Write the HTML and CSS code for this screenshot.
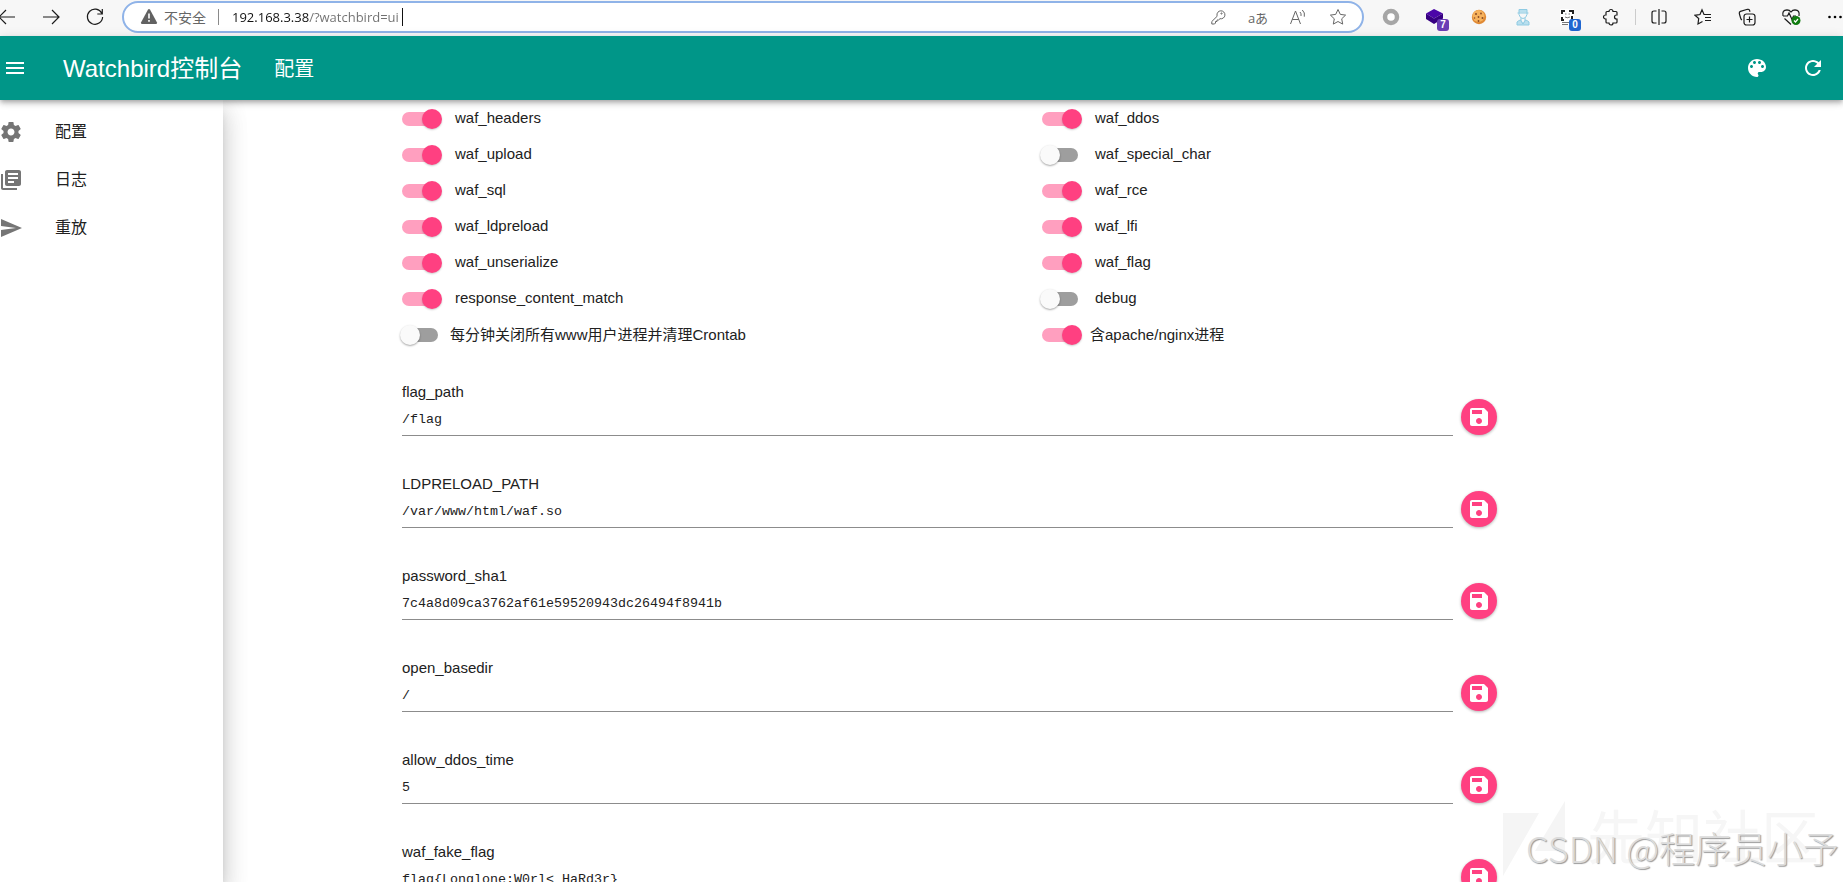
FILE: index.html
```html
<!DOCTYPE html>
<html lang="zh-CN">
<head>
<meta charset="utf-8">
<title>Watchbird控制台</title>
<link rel="stylesheet" href="styles.css">
</head>
<body>
<div class="browser">
  <div class="nav">
    <button class="tool nav-back" aria-label="后退"><svg width="20" height="20" viewBox="0 0 20 20" class="line"><path d="M18 10H2M9 3 2 10l7 7"/></svg></button>
    <button class="tool" aria-label="前进"><svg width="20" height="20" viewBox="0 0 20 20" class="line"><path d="M2 10h16M11 3l7 7-7 7"/></svg></button>
    <button class="tool" aria-label="刷新"><svg width="20" height="20" viewBox="0 0 20 20" class="line"><path d="M16.800 6.300A7.600 7.600 0 1 0 17.600 10M17.300 2v5h-5"/></svg></button>
  </div>
  <div class="address">
    <svg class="warn" width="18" height="18" viewBox="0 0 18 18"><path fill="#616161" d="M7.900 1.700 1 14.600Q.5 16 2 16h14q1.500 0 1-1.400L10.100 1.700Q9 .3 7.900 1.700z"/><path stroke="#fff" stroke-width="1.600" d="M9 5.500v5M9 12v1.700"/></svg>
    <span class="insecure">不安全</span>
    <span class="rule"></span>
    <input class="url" type="text" value="192.168.3.38/?watchbird=ui" aria-label="地址"><span class="caret"></span>
    <div class="address-tools">
      <button class="tool small" aria-label="密码"><svg width="16" height="16" viewBox="0 0 16 16" class="line grey"><path d="M7 6.500a4 4 0 1 1 3 3.200L8.500 11H7v1.500H5.500V14L4.500 15H1.800v-2.500L7.200 7.200z"/><circle cx="11.500" cy="4.500" r=".6"/></svg></button>
      <button class="tool small glyph" aria-label="翻译">aあ</button>
      <button class="tool small" aria-label="朗读"><svg width="18" height="18" viewBox="0 0 18 18" class="line grey"><path d="M1.500 16 6.500 3l5 13M3.300 11.500h6.500M11 4q1.500 1.500 1 4M13.300 2q3 2.600 2 6.700"/></svg></button>
      <button class="tool small" aria-label="收藏"><svg width="18" height="18" viewBox="0 0 18 18" class="line grey"><path d="m9 1.500 2.300 4.900 5.300.7-3.900 3.700 1 5.300L9 13.500l-4.700 2.600 1-5.300-3.900-3.700 5.300-.7z"/></svg></button>
    </div>
  </div>
  <div class="extensions">
    <button class="tool" aria-label="扩展"><svg width="18" height="18" viewBox="0 0 18 18"><circle cx="9" cy="9" r="6" fill="#fff" stroke="#a6a6a6" stroke-width="4.500"/></svg></button>
    <button class="tool" aria-label="扩展"><svg width="18" height="18" viewBox="0 0 18 18"><path fill="#4b06a8" d="m8 1 9 4.500-9 5-8-5z"/><path fill="#370082" d="m0 5.500 8 5 9-5v5L8 16 0 11z"/></svg><span class="badge violet">7</span></button>
    <button class="tool" aria-label="扩展"><svg width="16" height="16" viewBox="0 0 16 16"><circle cx="8" cy="8" r="7.200" fill="#e08a35"/><circle cx="7.500" cy="7" r="6" fill="#f6b25c"/><g fill="#8a4a22"><circle cx="5" cy="5" r="1"/><circle cx="10" cy="4.500" r=".9"/><circle cx="7.500" cy="8" r=".9"/><circle cx="3.500" cy="9" r=".8"/><circle cx="11.500" cy="9" r="1"/><circle cx="7.500" cy="12" r=".9"/></g></svg></button>
    <button class="tool" aria-label="扩展"><svg width="16" height="18" viewBox="0 0 16 18"><path fill="#b9dfee" d="M4 1.500h8v3H4zM2 17v-3q3-2 4-2l2 2.500L10 12q1 0 4 2v3z"/><path fill="none" stroke="#8fcbe3" d="M4 1.500h8v5q-1 4-4 4t-4-4zM2.500 5h11M6 10v3l2 3 2-3v-3M2 17v-3q2-2 4-2M14 17v-3q-2-2-4-2M2 17h12"/></svg></button>
    <button class="tool" aria-label="扩展"><svg width="16" height="18" viewBox="0 0 16 18" fill="none"><path fill="#fff" d="M1 1h14v16H1z"/><path stroke="#222" stroke-width="2" d="M3 6V3h3M10 3h4v3M3 9v3h2M13 8v3"/><path stroke="#777" d="M6 6h1.500M9.500 6H11M6 9q2 1.500 5 0M3 14.500h8M3 16.500h6"/></svg><span class="badge blue">0</span></button>
    <button class="tool" aria-label="扩展程序"><svg width="18" height="18" viewBox="0 0 18 18" class="line"><path d="M7 3.500a2 2 0 0 1 4 0h3q1 0 1 1V7h-.5a2 2 0 0 0 0 4h.5v3q0 1-1 1h-3a2 2 0 0 1-4 0H5q-1 0-1-1v-3H3.500a2 2 0 0 1 0-4H4V4.500q0-1 1-1z"/></svg></button>
    <span class="rule pale"></span>
    <button class="tool" aria-label="分屏"><svg width="18" height="18" viewBox="0 0 18 18" class="line"><path d="M6.500 3H4Q2 3 2 5v8q0 2 2 2h2.500M11.500 3H14q2 0 2 2v8q0 2-2 2h-2.500M9 1v16"/></svg></button>
    <button class="tool" aria-label="收藏夹"><svg width="18" height="18" viewBox="0 0 18 18" class="line"><path d="M11 6.500h-1L8 1.800 6 6.500l-5 .8 3.700 3.300L4 16l4.500-2.500M11 6.500h6M11 9.500h6M11 12.500h6"/></svg></button>
    <button class="tool" aria-label="集锦"><svg width="18" height="18" viewBox="0 0 18 18" class="line"><rect x="6" y="6" width="11" height="11" rx="2.500"/><path d="M11.500 8.500v6M8.500 11.500h6M4 12Q3 11.500 2.600 10L1.300 5.500Q1 4 2.500 3.400L9.500 1.300q1.500-.3 2 1l.5 1.500"/></svg></button>
    <button class="tool" aria-label="浏览器概要"><svg width="20" height="18" viewBox="0 0 20 18" class="line"><path d="M2 8Q.8 2 6 1.800q2.500 0 4 2.200 1.500-2.200 4-2.200Q19 2 18 8M2 8h4.500L8 5l3 6.500L12.500 8H15M3.500 10.500 10 16.500"/><circle cx="15" cy="12.500" r="4.500" fill="#107c10" stroke="none"/><path stroke="#fff" d="m13 12.500 1.500 1.500 2.500-3"/></svg></button>
    <button class="tool last" aria-label="设置及其他"><svg width="16" height="16" viewBox="0 0 16 16"><circle cx="2.500" cy="8" r="1.300"/><circle cx="8" cy="8" r="1.300"/><circle cx="13.500" cy="8" r="1.300"/></svg></button>
  </div>
</div>

<header class="appbar">
  <button class="icon-btn" aria-label="菜单"><svg width="24" height="24" viewBox="0 0 24 24"><path d="M3 18h18v-2H3v2zm0-5h18v-2H3v2zm0-7v2h18V6H3z"/></svg></button>
  <h1 class="brand">Watchbird控制台</h1>
  <span class="page-name">配置</span>
  <div class="actions">
    <button class="icon-btn" aria-label="主题"><svg width="24" height="24" viewBox="0 0 24 24"><path d="M12 3c-4.970 0-9 4.030-9 9s4.030 9 9 9c.83 0 1.500-.67 1.500-1.500 0-.39-.15-.74-.39-1.010-.23-.26-.38-.61-.38-.99 0-.83.67-1.500 1.500-1.500H16c2.760 0 5-2.240 5-5 0-4.420-4.030-8-9-8zm-5.500 9c-.83 0-1.500-.67-1.500-1.500S5.670 9 6.500 9 8 9.670 8 10.500 7.330 12 6.500 12zm3-4C8.670 8 8 7.330 8 6.500S8.670 5 9.500 5s1.500.67 1.500 1.500S10.330 8 9.500 8zm5 0c-.83 0-1.500-.67-1.500-1.500S13.670 5 14.500 5s1.500.67 1.500 1.500S15.330 8 14.500 8zm3 4c-.83 0-1.500-.67-1.500-1.500S16.670 9 17.500 9s1.500.67 1.500 1.500-.67 1.500-1.500 1.500z"/></svg></button>
    <button class="icon-btn" aria-label="重新加载"><svg width="24" height="24" viewBox="0 0 24 24"><path d="M17.650 6.350C16.200 4.900 14.210 4 12 4c-4.420 0-7.990 3.580-7.990 8s3.570 8 7.990 8c3.730 0 6.840-2.550 7.730-6h-2.080c-.82 2.330-3.040 4-5.650 4-3.310 0-6-2.690-6-6s2.690-6 6-6c1.660 0 3.140.69 4.220 1.780L13 11h7V4l-2.350 2.350z"/></svg></button>
  </div>
</header>

<div class="shell">
  <nav class="drawer">
    <a class="item" href="#config"><span class="ico"><svg width="24" height="24" viewBox="0 0 24 24"><path d="M19.430 12.980c.04-.32.07-.64.07-.98s-.03-.66-.07-.98l2.110-1.650c.19-.15.24-.42.12-.64l-2-3.460c-.12-.22-.39-.3-.61-.22l-2.490 1c-.52-.4-1.080-.73-1.690-.98l-.38-2.650C14.460 2.180 14.250 2 14 2h-4c-.25 0-.46.18-.49.42l-.38 2.650c-.61.25-1.170.59-1.690.98l-2.490-1c-.23-.09-.49 0-.61.22l-2 3.460c-.13.22-.07.49.12.64l2.110 1.650c-.04.32-.07.65-.07.98s.03.66.07.98l-2.110 1.650c-.19.15-.24.42-.12.64l2 3.460c.12.22.39.3.61.22l2.490-1c.52.4 1.080.73 1.690.98l.38 2.650c.03.24.24.42.49.42h4c.25 0 .46-.18.49-.42l.38-2.650c.61-.25 1.170-.59 1.690-.98l2.490 1c.23.09.49 0 .61-.22l2-3.460c.12-.22.07-.49-.12-.64l-2.110-1.650zM12 15.500c-1.930 0-3.500-1.570-3.500-3.500s1.570-3.500 3.500-3.500 3.500 1.570 3.500 3.500-1.570 3.500-3.500 3.500z"/></svg></span>配置</a>
    <a class="item" href="#log"><span class="ico"><svg width="24" height="24" viewBox="0 0 24 24"><path d="M4 6H2v14c0 1.100.9 2 2 2h14v-2H4V6zm16-4H8c-1.100 0-2 .9-2 2v12c0 1.100.9 2 2 2h12c1.100 0 2-.9 2-2V4c0-1.100-.9-2-2-2zm-1 9H9V9h10v2zm-4 4H9v-2h6v2zm4-8H9V5h10v2z"/></svg></span>日志</a>
    <a class="item" href="#replay"><span class="ico"><svg width="24" height="24" viewBox="0 0 24 24"><path d="M2.010 21 23 12 2.010 3 2 10l15 2-15 2z"/></svg></span>重放</a>
  </nav>

  <main class="main">
    <div class="container">
      <div class="switches">
        <label class="switch"><input type="checkbox" checked>waf_headers</label>
        <label class="switch"><input type="checkbox" checked>waf_ddos</label>
        <label class="switch"><input type="checkbox" checked>waf_upload</label>
        <label class="switch"><input type="checkbox">waf_special_char</label>
        <label class="switch"><input type="checkbox" checked>waf_sql</label>
        <label class="switch"><input type="checkbox" checked>waf_rce</label>
        <label class="switch"><input type="checkbox" checked>waf_ldpreload</label>
        <label class="switch"><input type="checkbox" checked>waf_lfi</label>
        <label class="switch"><input type="checkbox" checked>waf_unserialize</label>
        <label class="switch"><input type="checkbox" checked>waf_flag</label>
        <label class="switch"><input type="checkbox" checked>response_content_match</label>
        <label class="switch"><input type="checkbox">debug</label>
        <label class="switch tight"><input type="checkbox">每分钟关闭所有www用户进程并清理Crontab</label>
        <label class="switch tight"><input type="checkbox" checked>含apache/nginx进程</label>
      </div>
      <div class="fields">
        <div class="field"><label for="f1">flag_path</label><input id="f1" type="text" value="/flag"><button class="save" aria-label="保存"><svg width="24" height="24" viewBox="0 0 24 24"><use href="#save"/></svg></button></div>
        <div class="field"><label for="f2">LDPRELOAD_PATH</label><input id="f2" type="text" value="/var/www/html/waf.so"><button class="save" aria-label="保存"><svg width="24" height="24" viewBox="0 0 24 24"><use href="#save"/></svg></button></div>
        <div class="field"><label for="f3">password_sha1</label><input id="f3" type="text" value="7c4a8d09ca3762af61e59520943dc26494f8941b"><button class="save" aria-label="保存"><svg width="24" height="24" viewBox="0 0 24 24"><use href="#save"/></svg></button></div>
        <div class="field"><label for="f4">open_basedir</label><input id="f4" type="text" value="/"><button class="save" aria-label="保存"><svg width="24" height="24" viewBox="0 0 24 24"><use href="#save"/></svg></button></div>
        <div class="field"><label for="f5">allow_ddos_time</label><input id="f5" type="text" value="5"><button class="save" aria-label="保存"><svg width="24" height="24" viewBox="0 0 24 24"><use href="#save"/></svg></button></div>
        <div class="field"><label for="f6">waf_fake_flag</label><input id="f6" type="text" value="flag{Longlone:W0rl&lt;_HaRd3r}"><button class="save" aria-label="保存"><svg width="24" height="24" viewBox="0 0 24 24"><use href="#save"/></svg></button></div>
      </div>
    </div>
  </main>
</div>

<div class="community"><svg width="62" height="75" viewBox="0 0 62 75"><path d="M0 12h36L0 75zM62 0v50H32z"/></svg><span>先知社区</span></div>
<div class="credit">CSDN @程序员小予</div>

<svg class="defs" width="0" height="0"><defs><path id="save" d="M17 3H5c-1.110 0-2 .9-2 2v14c0 1.100.89 2 2 2h14c1.100 0 2-.9 2-2V7l-4-4zm-5 16c-1.660 0-3-1.340-3-3s1.340-3 3-3 3 1.340 3 3-1.340 3-3 3zm3-10H5V5h10v4z"/></defs></svg>
</body>
</html>
```
FILE: styles.css
```css
* { box-sizing: border-box; }
html, body { height: 100%; }
body {
  margin: 0;
  display: flex;
  flex-direction: column;
  overflow: hidden;
  position: relative;
  background: #fff;
  color: #212121;
  font-family: "Liberation Sans", "Noto Sans CJK SC", sans-serif;
  font-size: 15px;
}
button { padding: 0; border: 0; background: none; color: inherit; font-family: inherit; cursor: pointer; }
svg { display: block; flex: none; }

/* Browser toolbar */
.browser {
  flex: none;
  display: flex;
  align-items: flex-start;
  height: 36px;
  padding-top: 1px;
  background: #f7f7f7;
}
.nav { display: flex; width: 122px; }
.tool { position: relative; flex: none; width: 44px; height: 32px; display: flex; align-items: center; justify-content: center; }
.nav-back { width: 29px; justify-content: flex-start; }
.nav-back svg { margin-left: -3px; }
.tool.small { width: 40px; }
.tool.last { width: 30px; justify-content: flex-end; }
.line { fill: none; stroke: #1b1b1b; stroke-width: 1.2; }
.line.grey { stroke: #666; stroke-width: 1; }
.glyph { color: #666; font-size: 13px; font-family: "Open Sans", "Noto Sans CJK JP", sans-serif; }
.address {
  flex: 1;
  display: flex;
  align-items: center;
  height: 32px;
  padding: 0 4px 0 16px;
  border: 2px solid #8fb3e8;
  border-radius: 16px;
  background: #fff;
  font-family: "Open Sans", "Noto Sans CJK SC", sans-serif;
}
.insecure { margin-left: 6px; font-size: 14px; color: #666; }
.rule { flex: none; width: 1px; height: 16px; margin: 0 13px 0 12px; background: #8a8a8a; }
.rule.pale { align-self: center; margin: 0 1px 0 2px; background: #ccc; }
.url {
  field-sizing: content;
  padding: 0 3px 0 0;
  border: 0;
  outline: 0;
  font-family: inherit;
  font-size: 13px;
  color: transparent;
  background: linear-gradient(90deg, #111 77px, #707070 77px);
  background-clip: text;
}
.caret { width: 1px; height: 18px; background: #111; }
.address-tools { display: flex; margin-left: auto; }
.extensions { display: flex; margin-left: 5px; }
.badge {
  position: absolute;
  right: 8px;
  bottom: 2px;
  width: 12px;
  height: 12px;
  border-radius: 3px;
  color: #fff;
  font-size: 10px;
  line-height: 12px;
  font-weight: bold;
  text-align: center;
}
.violet { background: #6a3db5; }
.blue { background: #1f66d0; }

/* App bar */
.appbar {
  position: relative;
  z-index: 2;
  flex: none;
  display: flex;
  align-items: center;
  height: 64px;
  padding: 0 18px 0 3px;
  background: #009688;
  color: #fff;
  box-shadow: 0 2px 4px -1px rgba(0,0,0,.2), 0 4px 5px rgba(0,0,0,.14), 0 1px 10px rgba(0,0,0,.12);
}
.icon-btn svg { fill: #fff; }
.brand { margin: 0 0 0 36px; padding-bottom: 4px; font-size: 24px; font-weight: normal; }
.page-name { margin-left: 32px; padding-bottom: 2px; font-size: 20px; }
.actions { display: flex; gap: 32px; margin-left: auto; }

/* Layout */
.shell { flex: 1; display: flex; min-height: 0; }
.drawer {
  flex: none;
  width: 223px;
  padding-top: 8px;
  box-shadow: 0 8px 10px -5px rgba(0,0,0,.2), 0 16px 24px 2px rgba(0,0,0,.12), 0 6px 24px 2px rgba(0,0,0,.1);
}
.item { display: flex; align-items: center; gap: 33px; height: 48px; padding-bottom: 4px; color: #212121; font-size: 16px; text-decoration: none; }
.ico { display: flex; justify-content: center; width: 22px; padding-top: 4px; }
.ico svg { fill: #757575; }
.main { flex: 1; min-width: 0; overflow: hidden; }
.container { max-width: 1280px; margin: 0 auto; padding: 1px 9px 0; }

/* Switches */
.switches { display: grid; grid-template-columns: 1fr 1fr; column-gap: 18px; }
.switch { display: flex; align-items: center; gap: 17px; height: 36px; padding-bottom: 4px; }
.switch.tight { gap: 12px; }
.switch input {
  appearance: none;
  position: relative;
  flex: none;
  width: 36px;
  height: 14px;
  margin: 4px 0 0;
  border-radius: 7px;
  background: #9e9e9e;
}
.switch input::before {
  content: "";
  position: absolute;
  top: -3px;
  left: -2px;
  width: 20px;
  height: 20px;
  border-radius: 50%;
  background: #fafafa;
  box-shadow: 0 1px 2px rgba(0,0,0,.35);
}
.switch input:checked { background: #ff9fbf; }
.switch input:checked::before { left: 20px; background: #ff4081; box-shadow: 0 1px 2px rgba(0,0,0,.2); }

/* Text fields */
.fields { display: grid; gap: 37px; max-width: 1095px; margin-top: 28px; }
.field { display: grid; grid-template-columns: 1fr 36px; grid-template-rows: 20px 35px; column-gap: 8px; }
.field label { grid-column: 1 / -1; line-height: 21px; }
.field input {
  min-width: 0;
  height: 35px;
  padding: 2px 0 0;
  border: 0;
  border-bottom: 1px solid #8c8c8c;
  outline: 0;
  background: none;
  color: #212121;
  font-family: "Liberation Mono", monospace;
}
.save {
  display: flex;
  align-items: center;
  justify-content: center;
  width: 36px;
  height: 36px;
  margin-top: -2px;
  border-radius: 50%;
  background: #ff4081;
  box-shadow: 0 1px 3px rgba(0,0,0,.3);
}
.save svg { fill: #fff; }

/* Watermarks */
.community {
  position: absolute;
  right: 24px;
  bottom: 6px;
  display: flex;
  align-items: center;
  gap: 22px;
  color: #f6f6f6;
  font-size: 58px;
  line-height: 75px;
  pointer-events: none;
}
.community svg { fill: #f5f5f5; }
.credit {
  position: absolute;
  right: 4px;
  bottom: 9px;
  color: #dcdcdc;
  font-family: "Noto Sans CJK SC", sans-serif;
  font-size: 36px;
  font-weight: 300;
  line-height: 52px;
  text-shadow: 1px 1px 1px #999;
  pointer-events: none;
}
```
